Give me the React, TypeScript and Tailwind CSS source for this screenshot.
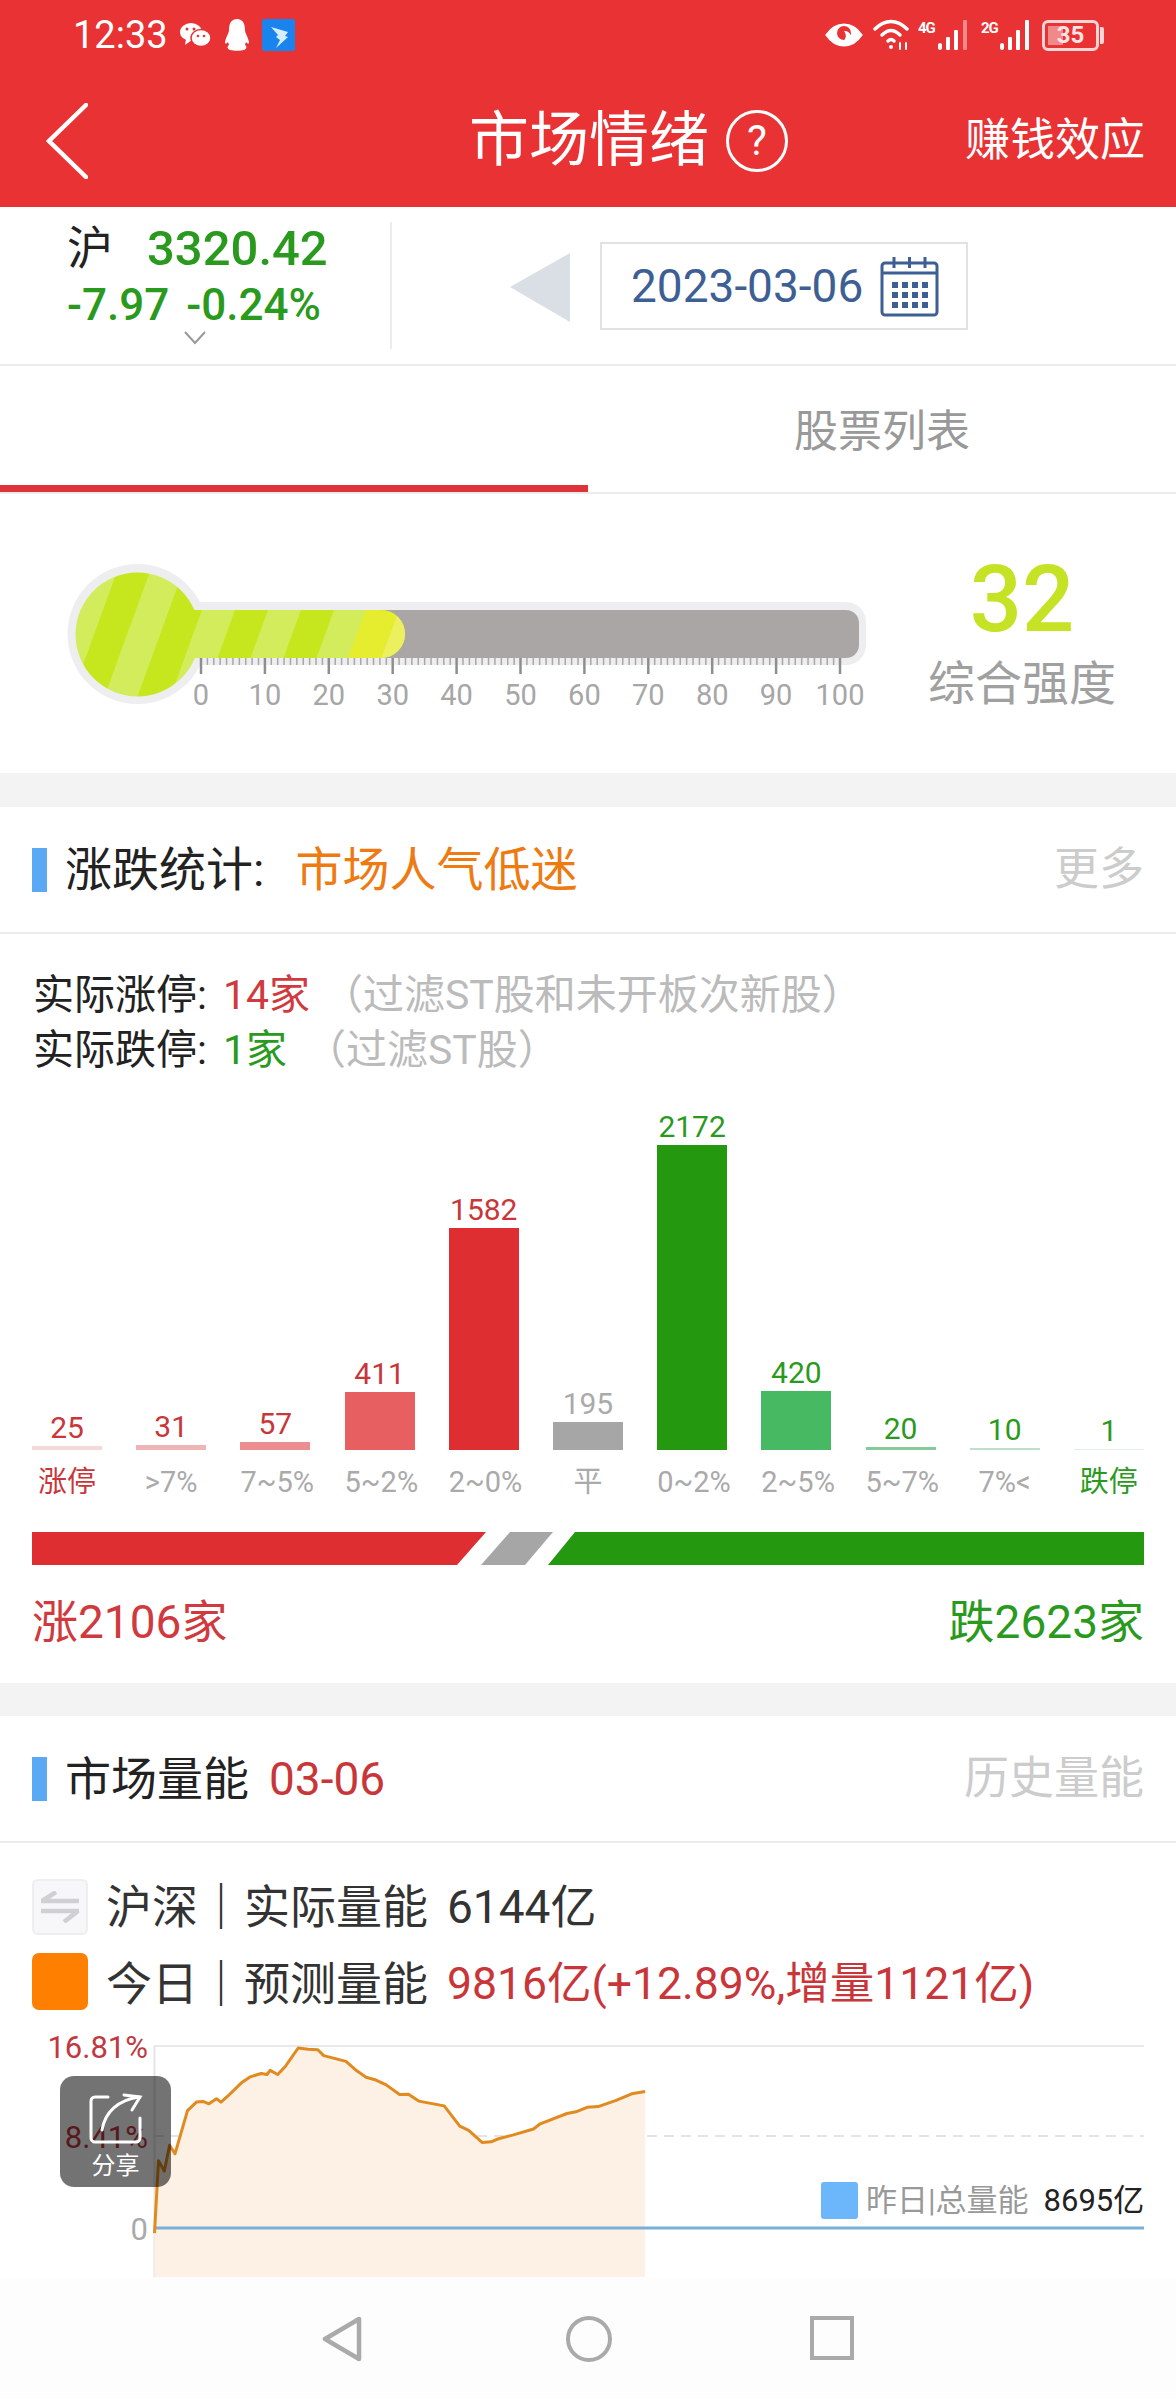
const RED = "#e83234";

const bars = [
  { value: "25", label: "涨停", h: 4, bar: "bg-[#f6d9d9]", num: "text-[#c9363a]", lab: "text-[#c9363a]" },
  { value: "31", label: ">7%", h: 5, bar: "bg-[#efb4b6]", num: "text-[#c9363a]", lab: "text-[#aaaaaa]" },
  { value: "57", label: "7~5%", h: 8, bar: "bg-[#ec8e90]", num: "text-[#c9363a]", lab: "text-[#aaaaaa]" },
  { value: "411", label: "5~2%", h: 58, bar: "bg-[#e85f61]", num: "text-[#c9363a]", lab: "text-[#aaaaaa]" },
  { value: "1582", label: "2~0%", h: 222, bar: "bg-[#de2e32]", num: "text-[#c9363a]", lab: "text-[#aaaaaa]" },
  { value: "195", label: "平", h: 28, bar: "bg-[#a6a6a6]", num: "text-[#aaaaaa]", lab: "text-[#aaaaaa]" },
  { value: "2172", label: "0~2%", h: 305, bar: "bg-[#24980f]", num: "text-[#2a9a1e]", lab: "text-[#aaaaaa]" },
  { value: "420", label: "2~5%", h: 59, bar: "bg-[#48b963]", num: "text-[#2a9a1e]", lab: "text-[#aaaaaa]" },
  { value: "20", label: "5~7%", h: 3, bar: "bg-[#86c99a]", num: "text-[#2a9a1e]", lab: "text-[#aaaaaa]" },
  { value: "10", label: "7%<", h: 2, bar: "bg-[#bfe0c8]", num: "text-[#2a9a1e]", lab: "text-[#aaaaaa]" },
  { value: "1", label: "跌停", h: 1, bar: "bg-[#dff0e4]", num: "text-[#2a9a1e]", lab: "text-[#2a9a1e]" },
];

// traced off the curve, x then y in page pixels after the map below
const curve = [
  [346, 1085], [355, 875], [368, 905], [380, 830], [392, 855], [420, 730], [440, 705], [455, 703],
  [468, 710], [485, 695], [495, 705], [510, 688], [540, 650], [560, 632], [585, 622], [598, 625],
  [605, 613], [622, 625], [640, 600], [668, 548], [690, 552], [712, 553], [725, 570], [775, 587],
  [800, 615], [820, 633], [840, 640], [865, 655], [895, 683], [915, 682], [938, 702], [995, 716],
  [1030, 775], [1050, 787], [1080, 822], [1100, 820], [1115, 812], [1150, 800], [1195, 783], [1210, 768],
  [1270, 738], [1290, 733], [1315, 720], [1340, 718], [1380, 700], [1415, 681], [1445, 674],
].map(([x, y]) => `${(x / 2.24).toFixed(1)},${(y / 2.9 + 1860).toFixed(1)}`);

function SignalBars({ faded }: { faded?: boolean }) {
  return (
    <svg width="34" height="32" viewBox="0 0 34 32" fill="#fff" className="block">
      <rect x="1" y="24" width="4" height="7" rx="2" />
      <rect x="9" y="18" width="4" height="13" rx="1" />
      <rect x="17" y="11" width="4" height="20" rx="1" />
      <rect x="26" y="1" width="4" height="30" rx="1" fill={faded ? "#f08a8a" : "#fff"} />
    </svg>
  );
}

function StatusBar() {
  return (
    <div className="flex h-[70px] items-center pl-[73px] pr-[72px] text-white">
      <span className="w-[107px] text-[38px] leading-none">12:33</span>
      <svg width="31" height="26" viewBox="0 0 31 26" fill="#fff" className="block">
        <ellipse cx="11" cy="10" rx="11" ry="9" />
        <path d="M6 17 5 23 12 18Z" />
        <ellipse cx="21" cy="16" rx="10" ry="8.5" stroke={RED} strokeWidth="1.5" />
        <circle cx="7" cy="7" r="1.5" fill={RED} />
        <circle cx="14" cy="7" r="1.5" fill={RED} />
        <circle cx="18" cy="14" r="1.3" fill={RED} />
        <circle cx="24" cy="14" r="1.3" fill={RED} />
      </svg>
      <svg width="26" height="32" viewBox="0 0 26 32" fill="#fff" className="ml-[13px] block">
        <path d="M13 0c6 0 8 5 8 11 0 3 3 7 4 12 .3 2-1 2-3 0l-1 3c2 1 2 4-1 5-4 1-10 1-14 0-3-1-3-4-1-5l-1-3c-2 2-3.300 2-3 0 1-5 4-9 4-12C5 5 7 0 13 0Z" />
      </svg>
      <svg width="33" height="32" viewBox="0 0 33 32" className="ml-[12px] block">
        <rect width="33" height="32" rx="2" fill="#1a84ee" />
        <path d="M9 8 26 13 23 17 26 18 14 29 18 21 14 18 16 16Z" fill="#d6ecff" />
      </svg>
      <div className="ml-auto flex items-center">
        <svg width="38" height="24" viewBox="0 0 38 24" className="block">
          <path d="M2 12C8 3 14 2 19 2s11 1 17 10c-6 9-12 10-17 10S8 21 2 12Z" fill="#fff" stroke="#fff" strokeWidth="3" />
          <circle cx="19" cy="10" r="7" fill={RED} />
          <path d="M19 8a7 7 0 0 1 7 5c-1 4-5 6-8 5 3-2 4-6 1-10Z" fill="#fff" />
        </svg>
        <svg width="36" height="32" viewBox="0 0 36 32" fill="none" stroke="#fff" strokeWidth="3.500" strokeLinecap="round" className="ml-[10px] block">
          <path d="M2 10C12 0 24 0 34 10" />
          <path d="M9 16c6-6 12-6 18 0" />
          <path d="M15 22c2-2 4-2 6 0" />
          <circle cx="18" cy="28" r="2" fill="#fff" stroke="none" />
          <path d="M27 24v6M33 24v6" strokeWidth="2" />
        </svg>
        <div className="ml-[9px] flex items-end">
          <span className="mb-[13px] w-[19px] text-[15px] font-bold leading-[19px] tracking-[-1px]">4G</span>
          <SignalBars faded />
        </div>
        <div className="ml-[10px] flex items-end">
          <span className="mb-[13px] w-[18px] text-[15px] font-bold leading-[19px] tracking-[-1px]">2G</span>
          <SignalBars />
        </div>
        <div className="ml-[9px] flex items-center">
          <div className="flex h-[31px] w-[57px] items-center rounded-[6px] border-[3px] border-[#fbd5d5] p-[3px]">
            <div className="relative h-full w-full">
              <div className="h-full w-[34%] bg-[#f08a8a]" />
              <span className="absolute inset-0 text-center text-[24px] font-bold leading-[19px] text-[#fde4e4]">35</span>
            </div>
          </div>
          <div className="ml-[1px] h-[17px] w-[4px] rounded-r-[2px] bg-[#fbd5d5]" />
        </div>
      </div>
    </div>
  );
}

function Header() {
  return (
    <div className="h-[207px] bg-[#e83234] text-white">
      <StatusBar />
      <div className="flex h-[137px] items-center pl-[46px] pr-[31px] pt-[4px]">
        <svg width="42" height="76" viewBox="0 0 42 76" fill="none" stroke="#fff" strokeWidth="4.500" strokeLinecap="round" className="block">
          <path d="M40 2 3 38l37 36" />
        </svg>
        <span className="ml-[381px] text-[60px] leading-none">市场情绪</span>
        <div className="ml-[17px] flex h-[62px] w-[62px] items-center justify-center rounded-full border-[3.500px] border-white text-[42px] leading-none">?</div>
        <span className="ml-auto text-[45px] leading-none">赚钱效应</span>
      </div>
    </div>
  );
}

function CalendarIcon() {
  return (
    <svg width="59" height="61" viewBox="0 0 59 61" fill="none" stroke="#3d5f94" className="block">
      <rect x="2" y="7" width="55" height="52" rx="3" strokeWidth="3" />
      <path d="M2 17h55" strokeWidth="3" />
      <path d="M14 1v11M29.500 1v11M45 1v11" strokeWidth="3" />
      <g fill="#3d5f94" stroke="none">
        {[26, 36, 46].map((y) =>
          [12, 22, 32, 42].map((x) => <rect key={`${x}-${y}`} x={x} y={y} width="6" height="6" />)
        )}
      </g>
    </svg>
  );
}

function IndexRow() {
  return (
    <div className="flex h-[159px] items-start border-b-2 border-[#ececec]">
      <div className="mt-[15px] h-[127px] w-[392px] border-r-2 border-[#ececec] pl-[67px]">
        <div className="flex h-[52px] items-center">
          <span className="w-[80px] text-[46px] leading-none text-[#222]">沪</span>
          <span className="text-[49px] font-medium leading-none text-[#2a9a1e]">3320.42</span>
        </div>
        <div className="mt-[9px] flex items-center text-[44px] font-medium leading-[44px] text-[#2a9a1e]">
          <span>-7.97</span>
          <span className="ml-[17px]">-0.24%</span>
        </div>
        <svg width="22" height="14" viewBox="0 0 22 14" fill="none" stroke="#999" strokeWidth="2" className="ml-[117px] mt-[4px] block">
          <path d="M1 1l10 11L21 1" />
        </svg>
      </div>
      <svg width="60" height="69" viewBox="0 0 60 69" className="ml-[118px] mt-[46px] block">
        <path d="M60 0v69L0 34Z" fill="#d9dfe5" />
      </svg>
      <div className="ml-[30px] mt-[35px] flex h-[88px] w-[368px] items-center border-2 border-[#e2e2e2] pl-[29px]">
        <span className="w-[249px] whitespace-nowrap text-[46px] leading-none text-[#3d5f94]">2023-03-06</span>
        <CalendarIcon />
      </div>
    </div>
  );
}

function Tabs() {
  return (
    <div className="h-[128px] border-b-2 border-[#ececec]">
      <div className="flex h-[119px] items-center">
        <div className="w-[588px]" />
        <div className="w-[588px] pt-[12px] text-center text-[44px] leading-none text-[#999]">股票列表</div>
      </div>
      <div className="h-[7px] w-[588px] bg-[#de3338]" />
    </div>
  );
}

function Thermometer() {
  const ticks = Array.from({ length: 101 }, (_, i) => i);
  return (
    <svg width="820" height="160" viewBox="60 555 820 160" className="block overflow-visible">
      <defs>
        <pattern id="stripes" width="66" height="66" patternUnits="userSpaceOnUse" patternTransform="translate(61 0) skewX(-20)">
          <rect width="66" height="66" fill="#c6e61e" />
          <rect x="33" width="33" height="66" fill="#d2ec5c" />
        </pattern>
        <clipPath id="tubeFill">
          <path d="M190 610h191a24 24 0 0 1 0 48H190Z" />
        </clipPath>
      </defs>
      <circle cx="137.500" cy="634" r="70" fill="#eeeef0" />
      <path d="M185 602h661a20 20 0 0 1 20 20v23a20 20 0 0 1-20 20H185Z" fill="#eeeef0" />
      <rect x="190" y="610" width="669" height="48" rx="13" fill="#aba6a6" />
      <g clipPath="url(#tubeFill)">
        <rect x="190" y="610" width="216" height="48" fill="url(#stripes)" />
        <polygon points="366,610 399,610 381,658 348,658" fill="#e6ec2e" />
        <polygon points="399,610 420,610 420,658 381,658" fill="#ecf05e" />
      </g>
      <circle cx="137.500" cy="634.500" r="62" fill="url(#stripes)" />
      {ticks.map((i) => {
        const x = 201 + i * 6.39;
        const major = i % 10 === 0;
        return (
          <line key={i} x1={x} x2={x} y1="658" y2={major ? 674 : 665} stroke={major ? "#8e8e8e" : "#a8a8a8"} strokeWidth={major ? 2.5 : 1.5} />
        );
      })}
      {ticks.filter((i) => i % 10 === 0).map((i) => (
        <text key={i} x={201 + i * 6.39} y="705" textAnchor="middle" fontSize="29" fill="#a6a6a6">
          {i}
        </text>
      ))}
    </svg>
  );
}

function StrengthSection() {
  return (
    <div className="flex h-[279px] pl-[60px] pt-[61px]">
      <Thermometer />
      <div className="ml-[50px] mt-[-3px] flex w-[184px] flex-col items-center">
        <span className="text-[92px] font-medium leading-[96px] text-[#c5e224]">32</span>
        <span className="mt-[12px] whitespace-nowrap text-[47px] leading-none text-[#a0a0a0]">综合强度</span>
      </div>
    </div>
  );
}

function SectionHead({ children, right }: { children: React.ReactNode; right: string }) {
  return (
    <div className="flex h-[127px] items-center border-b-2 border-[#ececec] pl-[32px] pr-[32px]">
      <div className="mr-[18px] h-[44px] w-[15px] bg-[#5aa9f5]" />
      {children}
      <span className="ml-auto text-[45px] leading-none text-[#cccccc]">{right}</span>
    </div>
  );
}

function StatsSection() {
  return (
    <div className="h-[876px]">
      <SectionHead right="更多">
        <span className="text-[47px] leading-none text-[#222]">涨跌统计:</span>
        <span className="ml-[31px] text-[47px] leading-none text-[#ee7a12]">市场人气低迷</span>
      </SectionHead>
      <div className="pl-[33px] pt-[34px] text-[41px] leading-[55px]">
        <div className="flex whitespace-nowrap">
          <span className="w-[190px] text-[#222]">实际涨停:</span>
          <span className="w-[99px] text-[#d03a3e]">14家</span>
          <span className="text-[#bbbbbb]">（过滤ST股和未开板次新股）</span>
        </div>
        <div className="flex whitespace-nowrap">
          <span className="w-[190px] text-[#222]">实际跌停:</span>
          <span className="w-[82px] text-[#2a9a1e]">1家</span>
          <span className="text-[#bbbbbb]">（过滤ST股）</span>
        </div>
      </div>
      <div className="flex h-[372px] items-end justify-between px-[32px]">
        {bars.map((b) => (
          <div key={b.label} className="flex w-[70px] flex-col items-center">
            <span className={`mb-[2px] text-[30px] leading-[32px] ${b.num}`}>{b.value}</span>
            <div className={`w-full ${b.bar}`} style={{ height: b.h }} />
          </div>
        ))}
      </div>
      <div className="mt-[15px] flex h-[33px] justify-between px-[32px]">
        {bars.map((b) => (
          <span key={b.label} className={`w-[70px] whitespace-nowrap text-center text-[29px] leading-[34px] ${b.lab}`}>
            {b.label}
          </span>
        ))}
      </div>
      <svg width="1112" height="33" viewBox="32 1532 1112 33" className="mx-[32px] mt-[34px] block">
        <polygon points="32,1532 486,1532 457,1565 32,1565" fill="#de2e32" />
        <polygon points="510,1532 553,1532 525,1565 481,1565" fill="#a6a6a6" />
        <polygon points="575,1532 1144,1532 1144,1565 548,1565" fill="#24980f" />
      </svg>
      <div className="mt-[33px] flex justify-between px-[32px] text-[46px] leading-[48px]">
        <span className="text-[#d03a3e]">涨2106家</span>
        <span className="text-[#2a9a1e]">跌2623家</span>
      </div>
    </div>
  );
}

function ShareButton() {
  return (
    <div className="absolute left-[60px] top-[37px] flex h-[111px] w-[111px] flex-col items-center rounded-[14px] bg-black/55 pt-[17px] text-white">
      <svg width="56" height="52" viewBox="0 0 56 52" fill="none" stroke="#fff" strokeWidth="3" strokeLinecap="round" className="block">
        <path d="M20 4H7a4 4 0 0 0-4 4v37a4 4 0 0 0 4 4h41a4 4 0 0 0 4-4V25" />
        <path d="M14 37C17 19 30 7 51 4" />
        <path d="M36 2l16 2-8 13" />
      </svg>
      <span className="mt-[7px] text-[24px] leading-[28px]">分享</span>
    </div>
  );
}

function VolumeChart() {
  return (
    <div className="relative mt-[29px] h-[238px]">
      <svg width="1176" height="238" viewBox="0 2040 1176 238" className="block overflow-visible">
        <line x1="154" x2="1144" y1="2047" y2="2047" stroke="#e9e9e9" strokeWidth="2" />
        <line x1="154" x2="1144" y1="2137" y2="2137" stroke="#e4e4e4" strokeWidth="2" strokeDasharray="10 7" />
        <line x1="154.500" x2="154.500" y1="2047" y2="2278" stroke="#e4e4e4" strokeWidth="2" />
        <polygon points={`154.500,2278 ${curve.join(" ")} 645,2278`} fill="#fdf0e4" />
        <line x1="154" x2="1144" y1="2229" y2="2229" stroke="#7ab0d8" strokeWidth="3" />
        <polyline points={curve.join(" ")} fill="none" stroke="#e08a20" strokeWidth="3" strokeLinejoin="round" />
        <g fontSize="31" textAnchor="end">
          <text x="148" y="2059" fill="#c0393f">16.81%</text>
          <text x="148" y="2149" fill="#c0393f">8.41%</text>
          <text x="148" y="2241" fill="#aaaaaa">0</text>
        </g>
      </svg>
      <div className="absolute left-[821px] top-[143px] flex h-[37px] items-center text-[31px] leading-none">
        <div className="h-[37px] w-[37px] rounded-[3px] bg-[#6cb6fb]" />
        <span className="ml-[8px] text-[#999]">昨日|总量能</span>
        <span className="ml-[15px] text-[#222]">8695亿</span>
      </div>
      <ShareButton />
    </div>
  );
}

function VolumeSection() {
  return (
    <div>
      <SectionHead right="历史量能">
        <span className="text-[46px] leading-none text-[#222]">市场量能</span>
        <span className="ml-[20px] whitespace-nowrap text-[46px] leading-none text-[#c9363a]">03-06</span>
      </SectionHead>
      <div className="box-content flex h-[60px] items-center pl-[32px] pt-[34px] text-[46px] leading-none text-[#333]">
        <div className="flex h-[56px] w-[56px] items-center justify-center rounded-[6px] border-2 border-[#eeeeee] bg-[#f7f7fa]">
          <svg width="40" height="32" viewBox="0 0 40 32" fill="none" stroke="#cfcfd4" strokeWidth="4.500" className="block">
            <path d="M1 10h38M2 10 16 1" />
            <path d="M1 20h38M38 20 24 31" />
          </svg>
        </div>
        <span className="ml-[18px]">沪深<span className="font-bold">｜</span>实际量能</span>
        <span className="ml-[19px] text-[#333]">6144亿</span>
      </div>
      <div className="mt-[16px] flex h-[57px] items-center pl-[32px] text-[46px] leading-none text-[#333]">
        <div className="h-[57px] w-[56px] rounded-[7px] bg-[#ff7f00]" />
        <span className="ml-[18px] pt-[5px]">今日<span className="font-bold">｜</span>预测量能</span>
        <span className="ml-[19px] whitespace-nowrap pt-[5px] text-[44.5px] text-[#c9363a]">9816亿(+12.89%,增量1121亿)</span>
      </div>
      <VolumeChart />
    </div>
  );
}

function NavBar() {
  return (
    <div className="flex h-[122px] items-start bg-[#fdfdfd] pl-[322px] pt-[39px]">
      <svg width="40" height="46" viewBox="0 0 40 46" fill="none" stroke="#aaaaaa" strokeWidth="4.500" strokeLinejoin="round" className="block">
        <path d="M37 3v40L3 23Z" />
      </svg>
      <div className="ml-[204px] h-[46px] w-[46px] rounded-full border-[4.500px] border-[#aaaaaa]" />
      <div className="ml-[198px] h-[44px] w-[44px] border-[4.500px] border-[#aaaaaa]" />
    </div>
  );
}

export default function App() {
  return (
    <div className="h-[2400px] w-[1176px] overflow-hidden bg-white font-['Roboto','Noto_Sans_CJK_SC',sans-serif]">
      <Header />
      <IndexRow />
      <Tabs />
      <StrengthSection />
      <div className="h-[34px] bg-[#f3f3f3]" />
      <StatsSection />
      <div className="h-[33px] bg-[#f3f3f3]" />
      <VolumeSection />
      <NavBar />
    </div>
  );
}
